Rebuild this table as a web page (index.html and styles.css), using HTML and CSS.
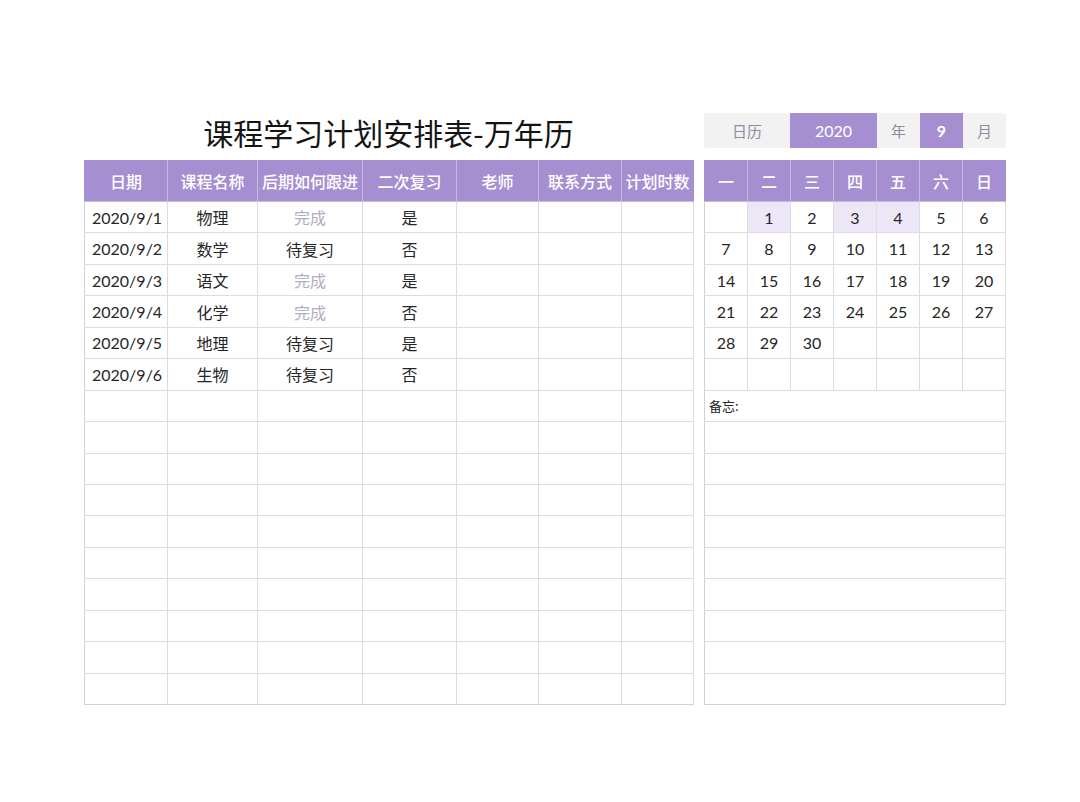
FILE: index.html
```html
<!DOCTYPE html>
<html lang="zh">
<head>
<meta charset="utf-8">
<title>课程学习计划安排表-万年历</title>
<link rel="stylesheet" href="styles.css">
</head>
<body>
<div class="page">
  <section class="left">
    <h1 class="title">课程学习计划安排表-万年历</h1>
    <table class="plan">
      <colgroup>
        <col style="width:83px"><col style="width:90px"><col style="width:105px"><col style="width:94px"><col style="width:82px"><col style="width:83px"><col style="width:72px">
      </colgroup>
      <thead>
        <tr><th>日期</th><th>课程名称</th><th>后期如何跟进</th><th>二次复习</th><th>老师</th><th>联系方式</th><th>计划时数</th></tr>
      </thead>
      <tbody>
        <tr><td class="date">2020/9/1</td><td>物理</td><td class="done">完成</td><td>是</td><td></td><td></td><td></td></tr>
        <tr><td class="date">2020/9/2</td><td>数学</td><td>待复习</td><td>否</td><td></td><td></td><td></td></tr>
        <tr><td class="date">2020/9/3</td><td>语文</td><td class="done">完成</td><td>是</td><td></td><td></td><td></td></tr>
        <tr><td class="date">2020/9/4</td><td>化学</td><td class="done">完成</td><td>否</td><td></td><td></td><td></td></tr>
        <tr><td class="date">2020/9/5</td><td>地理</td><td>待复习</td><td>是</td><td></td><td></td><td></td></tr>
        <tr><td class="date">2020/9/6</td><td>生物</td><td>待复习</td><td>否</td><td></td><td></td><td></td></tr>
        <tr><td></td><td></td><td></td><td></td><td></td><td></td><td></td></tr>
        <tr><td></td><td></td><td></td><td></td><td></td><td></td><td></td></tr>
        <tr><td></td><td></td><td></td><td></td><td></td><td></td><td></td></tr>
        <tr><td></td><td></td><td></td><td></td><td></td><td></td><td></td></tr>
        <tr><td></td><td></td><td></td><td></td><td></td><td></td><td></td></tr>
        <tr><td></td><td></td><td></td><td></td><td></td><td></td><td></td></tr>
        <tr><td></td><td></td><td></td><td></td><td></td><td></td><td></td></tr>
        <tr><td></td><td></td><td></td><td></td><td></td><td></td><td></td></tr>
        <tr><td></td><td></td><td></td><td></td><td></td><td></td><td></td></tr>
        <tr><td></td><td></td><td></td><td></td><td></td><td></td><td></td></tr>
      </tbody>
    </table>
  </section>
  <section class="right">
    <div class="bar">
      <div class="bar-cell label wide">日历</div>
      <div class="bar-cell value wide">2020</div>
      <div class="bar-cell label">年</div>
      <div class="bar-cell value bold">9</div>
      <div class="bar-cell label">月</div>
    </div>
    <table class="cal">
      <thead>
        <tr><th>一</th><th>二</th><th>三</th><th>四</th><th>五</th><th>六</th><th>日</th></tr>
      </thead>
      <tbody>
        <tr><td></td><td class="hl">1</td><td>2</td><td class="hl">3</td><td class="hl">4</td><td>5</td><td>6</td></tr>
        <tr><td>7</td><td>8</td><td>9</td><td>10</td><td>11</td><td>12</td><td>13</td></tr>
        <tr><td>14</td><td>15</td><td>16</td><td>17</td><td>18</td><td>19</td><td>20</td></tr>
        <tr><td>21</td><td>22</td><td>23</td><td>24</td><td>25</td><td>26</td><td>27</td></tr>
        <tr><td>28</td><td>29</td><td>30</td><td></td><td></td><td></td><td></td></tr>
        <tr><td></td><td></td><td></td><td></td><td></td><td></td><td></td></tr>
        <tr><td colspan="7" class="memo">备忘:</td></tr>
        <tr><td colspan="7"></td></tr>
        <tr><td colspan="7"></td></tr>
        <tr><td colspan="7"></td></tr>
        <tr><td colspan="7"></td></tr>
        <tr><td colspan="7"></td></tr>
        <tr><td colspan="7"></td></tr>
        <tr><td colspan="7"></td></tr>
        <tr><td colspan="7"></td></tr>
        <tr><td colspan="7"></td></tr>
      </tbody>
    </table>
  </section>
</div>
</body>
</html>
```

FILE: styles.css
```css
* { box-sizing: border-box; }
html, body { margin: 0; padding: 0; background: #ffffff; }
body {
  font-family: "Lato", "Noto Sans CJK SC", sans-serif;
  color: #262626;
  width: 1080px;
  height: 802px;
  overflow: hidden;
}
.page {
  display: flex;
  gap: 11px;
  padding: 113px 0 0 84px;
}
.left { width: 609px; }
.right { width: 302px; }

.title {
  margin: 0;
  height: 47px;
  padding-bottom: 9px;
  display: flex;
  align-items: center;
  justify-content: center;
  font-family: "Noto Sans CJK SC", sans-serif;
  font-size: 30px;
  font-weight: 400;
  color: #141414;
  letter-spacing: 0;
}

table {
  border-collapse: collapse;
  table-layout: fixed;
}
.plan { width: 609px; }
.cal { width: 302px; }

th {
  height: 41px;
  padding: 0;
  background: #a68fd1;
  color: #ffffff;
  font-family: "Noto Sans CJK SC", sans-serif;
  font-weight: 500;
  font-size: 16px;
  border: 1px solid #c7badf;
  border-top-color: #a68fd1;
  text-align: center;
}
.plan th:first-child, .cal th:first-child { border-left-color: #a68fd1; }
.plan th:last-child, .cal th:last-child { border-right-color: #a68fd1; }

td {
  height: 31.45px;
  padding: 0;
  border: 1px solid #dcdcdc;
  text-align: center;
  font-size: 16px;
  color: #262626;
  white-space: nowrap;
}
.plan td:first-child, .cal td:first-child { border-left-color: #d2d2d2; }
.plan tr:last-child td, .cal tr:last-child td { border-bottom-color: #d2d2d2; }

.plan td.date {
  text-align: left;
  padding-left: 7px;
}
.plan td.done { color: #b3adc0; }

.cal td { font-size: 16px; }
.cal td.hl { background: #ede6f7; }
.cal td.memo {
  text-align: left;
  padding-left: 4px;
  font-size: 13px;
  font-family: "Noto Sans CJK SC", sans-serif;
}

.bar {
  display: flex;
  height: 35px;
  margin-bottom: 12px;
  background: #f2f2f3;
  border-radius: 3px;
  overflow: hidden;
}
.bar-cell {
  width: 43px;
  display: flex;
  align-items: center;
  justify-content: center;
  font-size: 16px;
}
.bar-cell.wide { width: 87px; }
.bar-cell.wide:first-child { width: 86px; }
.bar-cell.label {
  color: #8f8ba0;
  font-family: "Noto Sans CJK SC", sans-serif;
  font-size: 15px;
}
.bar-cell.value {
  background: #a68fd1;
  color: #ffffff;
}
.bar-cell.bold { font-weight: 700; }
```
